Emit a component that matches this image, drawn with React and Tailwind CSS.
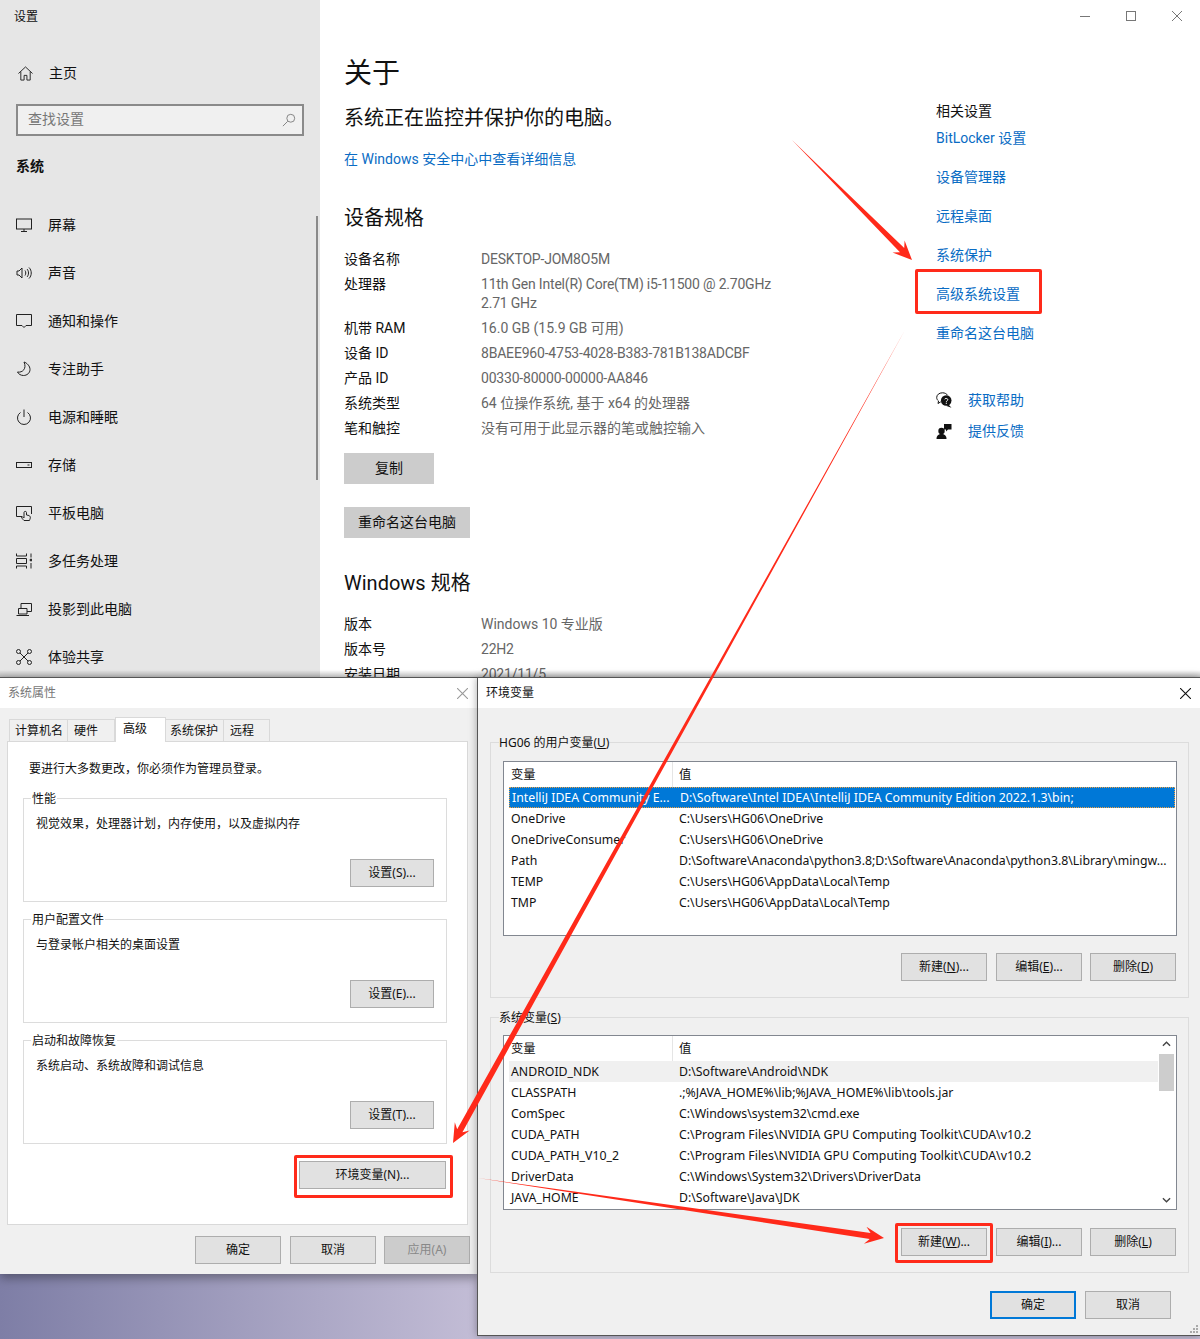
import React from 'react';

const sideItems = [
  { label: '屏幕', icon: <><rect x="0.5" y="2" width="15" height="10" /><path d="M8 12v2M5 14.5h6" /></> },
  { label: '声音', icon: <path d="M1 6h2l3-3v10l-3-3H1zM9 5.5c1 1.5 1 3.5 0 5M11 4c2 2 2 6 0 8M13 2.5c3 3 3 8 0 11" /> },
  { label: '通知和操作', icon: <path d="M.5 1.5h15v11H10L8 14.5l-2-2H.5z" /> },
  { label: '专注助手', icon: <path d="M8 1c3 1 6 4 6 7.5 0 3.5-3 6-6.500 6-2.500 0-5-1.300-6-3.500 5 1 9.500-3.500 6.500-10z" /> },
  { label: '电源和睡眠', icon: <path d="M4.500 3.500a6.500 6.500 0 1 0 7 0M8 .5v7.500" /> },
  { label: '存储', icon: <><rect x="0.5" y="5.500" width="15" height="5" /><path d="M11.500 8h2" /></> },
  { label: '平板电脑', icon: <path d="M6 11.500H.5v-10h15v7.500M8 15.500c-1-1-2.500-2.500-2.500-3.500 1-.5 2 .5 2.500 1V7.500c0-1.500 2.500-1.500 2.500 0V10l2.500.5c1 .5 1.500 1.500 1.300 2.500-.3 1-.8 2.500-.8 2.500z" /> },
  { label: '多任务处理', icon: <><path d="M.5 .5v2.500h10V.5M.5 15.500v-2.500h10v2.500M.5 5.500h10v5H.5zM15 .5v4M15 10v5.500" /><circle cx="15" cy="7" r="1" fill="currentColor" /></> },
  { label: '投影到此电脑', icon: <path d="M5 7.500V2.500h10.500v8H11M2.500 7.500h8.500v5.500H2.500zM.5 14.500h12.500" /> },
  { label: '体验共享', icon: <><circle cx="2.500" cy="2.500" r="2" /><circle cx="13.500" cy="2.500" r="2" /><circle cx="2.500" cy="13.500" r="2" /><circle cx="13.500" cy="13.500" r="2" /><path d="M4 4l8 8M12 4l-8 8" /></> },
];

const deviceSpecs = [
  ['设备名称', 'DESKTOP-JOM8O5M'],
  ['处理器', '11th Gen Intel(R) Core(TM) i5-11500 @ 2.70GHz', '2.71 GHz'],
  ['机带 RAM', '16.0 GB (15.9 GB 可用)'],
  ['设备 ID', '8BAEE960-4753-4028-B383-781B138ADCBF'],
  ['产品 ID', '00330-80000-00000-AA846'],
  ['系统类型', '64 位操作系统, 基于 x64 的处理器'],
  ['笔和触控', '没有可用于此显示器的笔或触控输入'],
];

const windowsSpecs = [
  ['版本', 'Windows 10 专业版'],
  ['版本号', '22H2'],
  ['安装日期', '2021/11/5'],
];

const relatedLinks = ['BitLocker 设置', '设备管理器', '远程桌面', '系统保护', '高级系统设置', '重命名这台电脑'];

const userVars = [
  ['IntelliJ IDEA Community E...', 'D:\\Software\\Intel IDEA\\IntelliJ IDEA Community Edition 2022.1.3\\bin;'],
  ['OneDrive', 'C:\\Users\\HG06\\OneDrive'],
  ['OneDriveConsumer', 'C:\\Users\\HG06\\OneDrive'],
  ['Path', 'D:\\Software\\Anaconda\\python3.8;D:\\Software\\Anaconda\\python3.8\\Library\\mingw...'],
  ['TEMP', 'C:\\Users\\HG06\\AppData\\Local\\Temp'],
  ['TMP', 'C:\\Users\\HG06\\AppData\\Local\\Temp'],
];

const systemVars = [
  ['ANDROID_NDK', 'D:\\Software\\Android\\NDK'],
  ['CLASSPATH', '.;%JAVA_HOME%\\lib;%JAVA_HOME%\\lib\\tools.jar'],
  ['ComSpec', 'C:\\Windows\\system32\\cmd.exe'],
  ['CUDA_PATH', 'C:\\Program Files\\NVIDIA GPU Computing Toolkit\\CUDA\\v10.2'],
  ['CUDA_PATH_V10_2', 'C:\\Program Files\\NVIDIA GPU Computing Toolkit\\CUDA\\v10.2'],
  ['DriverData', 'C:\\Windows\\System32\\Drivers\\DriverData'],
  ['JAVA_HOME', 'D:\\Software\\Java\\JDK'],
];

const tabs = [
  { label: '计算机名', cls: 'w-[59px] pl-[5px]' },
  { label: '硬件', cls: 'w-[47px] pl-[6px]' },
  { label: '高级', cls: 'w-[51px] pl-[7px]', active: true },
  { label: '系统保护', cls: 'w-[58px] pl-[4px]' },
  { label: '远程', cls: 'w-[46px] pl-[6px]' },
];

const groups = [
  { title: '性能', text: '视觉效果，处理器计划，内存使用，以及虚拟内存', button: '设置(S)...' },
  { title: '用户配置文件', text: '与登录帐户相关的桌面设置', button: '设置(E)...' },
  { title: '启动和故障恢复', text: '系统启动、系统故障和调试信息', button: '设置(T)...' },
];

function Glyph({ children, className = '' }) {
  return (
    <svg viewBox="0 0 16 16" fill="none" stroke="currentColor" strokeWidth="1" className={`size-4 shrink-0 text-[#222] ${className}`}>
      {children}
    </svg>
  );
}

function Settings() {
  return (
    <div className="absolute left-0 top-0 flex h-[678px] w-[1200px] overflow-hidden bg-white font-['Roboto','Noto_Sans_CJK_SC',sans-serif] text-[14px] text-[#111]">
      <aside className="relative w-[320px] shrink-0 bg-[#e6e6e6]">
        <div className="flex h-[33px] items-center pl-[14px] text-[12px]">设置</div>
        <div className="mt-[16px] flex h-[48px] items-center gap-[16px] pl-[18px]">
          <Glyph className="!size-[15px]"><path d="M.5 8L8 1l7.500 7M3 6v9h3.500v-5h3v5H13V6" /></Glyph>
          <span>主页</span>
        </div>
        <div className="mx-[16px] mt-[7px] flex h-[32px] items-center justify-between border-2 border-[#8a8a8a] bg-[#f0f0f0] pb-[2px] pl-[10px] pr-[6px] text-[#777]">
          <span>查找设置</span>
          <svg viewBox="0 0 16 16" fill="none" stroke="#777" strokeWidth="1" className="mt-[2px] size-[14px]">
            <circle cx="10" cy="6" r="4.500" />
            <path d="M6.500 9.500L1 15" />
          </svg>
        </div>
        <div className="mt-[18px] flex h-[24px] items-center pl-[16px] font-bold">系统</div>
        <nav className="mt-[23px]">
          {sideItems.map((item) => (
            <div key={item.label} className="flex h-[48px] items-center gap-[16px] pl-[16px]">
              <Glyph>{item.icon}</Glyph>
              <span>{item.label}</span>
            </div>
          ))}
        </nav>
        <div className="absolute right-[2px] top-[216px] h-[264px] w-[2px] bg-[#8a8a8a]" />
      </aside>

      <main className="w-[616px] shrink-0 pl-[24px]">
        <h1 className="mt-[54px] text-[28px] leading-[40px]">关于</h1>
        <p className="mt-[10px] text-[20px] leading-[28px]">系统正在监控并保护你的电脑。</p>
        <a className="mt-[17px] block leading-[20px] text-[#0a6cc4]">在 Windows 安全中心中查看详细信息</a>
        <h2 className="mt-[35px] text-[20px] leading-[28px]">设备规格</h2>
        <SpecTable rows={deviceSpecs} className="mt-[15px]" />
        <button className="mt-[12px] block h-[31px] w-[90px] bg-[#cccccc]">复制</button>
        <button className="mt-[23px] block h-[31px] w-[126px] bg-[#cccccc]">重命名这台电脑</button>
        <h2 className="mt-[31px] text-[20px] leading-[28px]">Windows 规格</h2>
        <SpecTable rows={windowsSpecs} className="mt-[15px]" />
      </main>

      <div className="flex-1">
        <div className="flex justify-end text-[#666]">
          <div className="flex h-[32px] w-[46px] items-center justify-center">
            <div className="h-px w-[10px] bg-[#777]" />
          </div>
          <div className="flex h-[32px] w-[46px] items-center justify-center">
            <div className="size-[10px] border border-[#777]" />
          </div>
          <div className="flex h-[32px] w-[46px] items-center justify-center">
            <CloseX className="size-[10px] text-[#777]" />
          </div>
        </div>
        <div className="mt-[69px] leading-[20px]">相关设置</div>
        <div className="mt-[7px] flex flex-col gap-[19px] leading-[20px] text-[#0a6cc4]">
          {relatedLinks.map((link) => <a key={link}>{link}</a>)}
        </div>
        <div className="mt-[47px] flex flex-col gap-[11px] leading-[20px] text-[#0a6cc4]">
          <a className="flex h-[20px] items-center gap-[16px]">
            <svg viewBox="0 0 16 16" className="size-4 shrink-0">
              <path d="M6.500 .8C3.200 .8 .7 2.800 .7 5.500c0 1.500.8 2.700 1.800 3.500L2 11.500l2.800-1.700" fill="none" stroke="#111" />
              <path d="M6.500 .8c2.300 0 4.200 1 5.200 2.600" fill="none" stroke="#111" />
              <circle cx="10.200" cy="8.500" r="5.300" fill="#111" />
              <path d="M12.500 12.500l3 3.200-5-1.700z" fill="#111" />
              <path d="M8.600 7.300c.2-1.200 3.200-1.200 3.200.4 0 1.100-1.500 1-1.500 2.200M10.300 10.700v1.200" fill="none" stroke="#fff" />
            </svg>
            获取帮助
          </a>
          <a className="flex h-[20px] items-center gap-[16px]">
            <svg viewBox="0 0 16 16" fill="#111" className="size-4 shrink-0">
              <circle cx="5.500" cy="8" r="3.200" />
              <path d="M.5 16c0-3.500 2-5 5-5s5 1.500 5 5z" />
              <path d="M8 1h7.500v5.500H12L10 8.500V6.500H8z" />
            </svg>
            提供反馈
          </a>
        </div>
      </div>
      <div className="absolute inset-x-0 bottom-0 h-[8px] bg-gradient-to-b from-transparent to-black/25" />
    </div>
  );
}

function SpecTable({ rows, className }) {
  return (
    <div className={`grid grid-cols-[137px_1fr] leading-[19px] ${className}`}>
      {rows.map(([label, ...values]) => (
        <React.Fragment key={label}>
          <div className="py-[3px]">{label}</div>
          <div className="py-[3px] text-[#666]">
            {values.map((v) => (
              // Segoe is narrower than Roboto, only latin lines get pulled in
              <div key={v} className={/^[\x00-\x7f]+$/.test(v) ? 'tracking-[-0.2px]' : ''}>{v}</div>
            ))}
          </div>
        </React.Fragment>
      ))}
    </div>
  );
}

function CloseX({ className }) {
  return (
    <svg viewBox="0 0 10 10" fill="none" stroke="currentColor" strokeWidth="1" className={className}>
      <path d="M0 0l10 10M10 0L0 10" />
    </svg>
  );
}

function DlgButton({ children, className = '' }) {
  return (
    <button className={`flex h-[28px] w-[86px] items-center justify-center border border-[#adadad] bg-[#e1e1e1] text-[12px] text-[#111] ${className}`}>
      {children}
    </button>
  );
}

function SystemProps() {
  return (
    <div className="absolute left-0 top-[677px] h-[597px] w-[478px] border-t border-[#555] bg-[#f0f0f0] shadow-[0_4px_10px_rgba(0,0,0,0.35)]">
      <div className="flex h-[30px] items-center justify-between bg-white pl-[8px] pr-[10px] text-[12px] text-[#777]">
        <span>系统属性</span>
        <CloseX className="size-[11px] text-[#999]" />
      </div>
      <div className="flex h-[33px] items-end pl-[9px] text-[12px] text-[#111]">
        {tabs.map((tab) => (
          <div
            key={tab.label}
            className={
              tab.active
                ? `z-10 -mb-px flex h-[25px] ${tab.cls} items-start border border-b-0 border-[#d9d9d9] bg-white pt-[2px]`
                : `flex h-[22px] ${tab.cls} items-center border border-l-0 border-b-0 border-[#d9d9d9] first:border-l`
            }
          >
            {tab.label}
          </div>
        ))}
      </div>
      <div className="ml-[7px] h-[484px] w-[461px] border border-[#d9d9d9] bg-white pl-[15px] text-[12px] text-[#111]">
        <p className="mt-[17px] pl-[6px] leading-[20px]">要进行大多数更改，你必须作为管理员登录。</p>
        <div className="mt-[19px] flex w-[424px] flex-col gap-[17px]">
          {groups.map((g) => (
            <div key={g.title} className="relative flex h-[104px] flex-col border border-[#dcdcdc] pb-[14px] pl-[12px] pr-[12px] pt-[15px]">
              <span className="absolute -top-[10px] left-[7px] bg-white px-[1px] leading-[20px]">{g.title}</span>
              <p className="leading-[20px]">{g.text}</p>
              <DlgButton className="mt-auto !w-[84px] self-end">{g.button}</DlgButton>
            </div>
          ))}
        </div>
        <div className="mt-[17px] flex w-[423px] justify-end">
          <DlgButton className="!w-[147px]">环境变量(N)...</DlgButton>
        </div>
      </div>
      <div className="mt-[11px] flex justify-end gap-[8px] pr-[8px]">
        <DlgButton className="mr-[1px]">确定</DlgButton>
        <DlgButton>取消</DlgButton>
        <DlgButton className="!bg-[#cccccc] !text-[#888]">应用(A)</DlgButton>
      </div>
    </div>
  );
}

function VarList({ rows, scroll, selected }) {
  return (
    <div className="ml-[12px] flex h-[175px] w-[674px] overflow-hidden border border-[#828790] bg-white text-[12.300px] leading-[18px] text-[#111]">
      <div className="min-w-0 flex-1 pl-[5px]">
        <div className="grid h-[25px] grid-cols-[163px_1fr] items-center">
          <span className="pl-[2px]">变量</span>
          <span className="h-full border-l border-[#e5e5e5] pl-[6px] leading-[25px]">值</span>
        </div>
        {rows.map(([name, value], i) => (
          <div
            key={name}
            className={`grid h-[21px] grid-cols-[170px_1fr] items-center whitespace-nowrap ${
              selected && i === 0
                ? 'border border-dotted border-[#f0a040] bg-[#0078d7] text-white'
                : !selected && i === 0
                  ? 'bg-[#f0f0f0]'
                  : ''
            }`}
          >
            <span className="pl-[2px]">{name}</span>
            <span>{value}</span>
          </div>
        ))}
      </div>
      {scroll ? (
        <div className="flex w-[18px] shrink-0 flex-col items-center pr-[1px] pt-[5px]">
          <svg viewBox="0 0 10 6" fill="none" stroke="#444" strokeWidth="1.500" className="h-[6px] w-[9px]"><path d="M1 5l4-4 4 4" /></svg>
          <div className="mt-[7px] h-[37px] w-[15px] bg-[#cdcdcd]" />
          <svg viewBox="0 0 10 6" fill="none" stroke="#444" strokeWidth="1.500" className="mt-auto mb-[6px] h-[6px] w-[9px]"><path d="M1 1l4 4 4-4" /></svg>
        </div>
      ) : (
        <div className="w-[1px] shrink-0" />
      )}
    </div>
  );
}

function Accel({ before, letter, dots = true }) {
  return (
    <span>{before}(<span className="underline">{letter}</span>){dots ? '...' : ''}</span>
  );
}

function VarGroup({ title, listPad, btnGap, rows, scroll, selected, buttons }) {
  return (
    <div className={`relative ml-[12px] h-[256px] w-[699px] border border-[#dcdcdc] ${listPad}`}>
      <span className="absolute -top-[10px] left-[8px] bg-[#f0f0f0] text-[12px] leading-[20px] text-[#111]">
        {title}
      </span>
      <VarList rows={rows} scroll={scroll} selected={selected} />
      <div className={`flex justify-end gap-[8px] pr-[12px] ${btnGap}`}>
        <DlgButton className="mr-[1px]"><Accel before="新建" letter={buttons[0]} /></DlgButton>
        <DlgButton><Accel before="编辑" letter={buttons[1]} /></DlgButton>
        <DlgButton><Accel before="删除" letter={buttons[2]} dots={false} /></DlgButton>
      </div>
    </div>
  );
}

function EnvVars() {
  return (
    <div className="absolute left-[477px] top-[677px] h-[659px] w-[723px] border-b border-l border-t border-[#555] bg-[#f0f0f0] shadow-[0_0_8px_rgba(0,0,0,0.35)]">
      <div className="flex h-[30px] items-center justify-between bg-white pl-[8px] pr-[9px] text-[12px] text-[#111]">
        <span>环境变量</span>
        <CloseX className="size-[11px] text-[#111]" />
      </div>
      <div className="pt-[34px]">
        <VarGroup
          title={<span>HG06 的用户变量(<span className="underline">U</span>)</span>}
          listPad="pt-[18px]"
          btnGap="mt-[17px]"
          rows={userVars}
          selected
          buttons={['N', 'E', 'D']}
        />
      </div>
      <div className="mt-[19px]">
        <VarGroup
          title={<span>系统变量(<span className="underline">S</span>)</span>}
          listPad="pt-[17px]"
          btnGap="mt-[18px]"
          rows={systemVars}
          scroll
          buttons={['W', 'I', 'L']}
        />
      </div>
      <div className="mt-[18px] flex justify-end gap-[8px] pr-[29px]">
        <DlgButton className="mr-[1px] border-2 !border-[#0078d7]">确定</DlgButton>
        <DlgButton>取消</DlgButton>
      </div>
      <svg viewBox="0 0 10 10" fill="#aaa" className="absolute bottom-[1px] right-[1px] size-[10px]">
        <rect x="7" y="1" width="2" height="2" />
        <rect x="4" y="4" width="2" height="2" />
        <rect x="7" y="4" width="2" height="2" />
        <rect x="1" y="7" width="2" height="2" />
        <rect x="4" y="7" width="2" height="2" />
        <rect x="7" y="7" width="2" height="2" />
      </svg>
    </div>
  );
}

// tapered annotation arrow: hairline at the tail, swept head at the tip
function arrowPoints([x1, y1], [x2, y2], shaft = 3, wing = 8.5, len = 19) {
  const d = Math.hypot(x2 - x1, y2 - y1);
  const ux = (x2 - x1) / d;
  const uy = (y2 - y1) / d;
  const px = -uy;
  const py = ux;
  const at = (back, side) => `${x2 - ux * back + px * side},${y2 - uy * back + py * side}`;
  return [
    `${x1},${y1}`,
    at(len - 5, shaft),
    at(len, wing),
    at(0, 0),
    at(len, -wing),
    at(len - 5, -shaft),
  ].join(' ');
}

function Annotations() {
  return (
    <>
      <svg viewBox="0 0 1200 1339" className="pointer-events-none absolute inset-0 h-[1339px] w-[1200px]">
        <polygon points={arrowPoints([792, 140], [912, 260])} fill="#ff2a1a" />
        <polygon points={arrowPoints([905, 330], [453, 1143])} fill="#ff2a1a" />
        <polygon points={arrowPoints([478, 1178], [884, 1238])} fill="#ff2a1a" />
      </svg>
      <div className="absolute left-[915px] top-[269px] h-[45px] w-[127px] rounded-[2px] border-[3px] border-[#ff2a1a]" />
      <div className="absolute left-[294px] top-[1155px] h-[43px] w-[159px] rounded-[2px] border-[3px] border-[#ff2a1a]" />
      <div className="absolute left-[895px] top-[1223px] h-[40px] w-[98px] rounded-[2px] border-[3px] border-[#ff2a1a]" />
    </>
  );
}

export default function App() {
  return (
    <div className="relative h-[1339px] w-[1200px] overflow-hidden bg-[linear-gradient(90deg,#7e7ea6_0%,#c3bdd6_40%,#c3bdd6_100%)] font-['Noto_Sans','Noto_Sans_CJK_SC',sans-serif]">
      <Settings />
      <SystemProps />
      <EnvVars />
      <Annotations />
    </div>
  );
}
